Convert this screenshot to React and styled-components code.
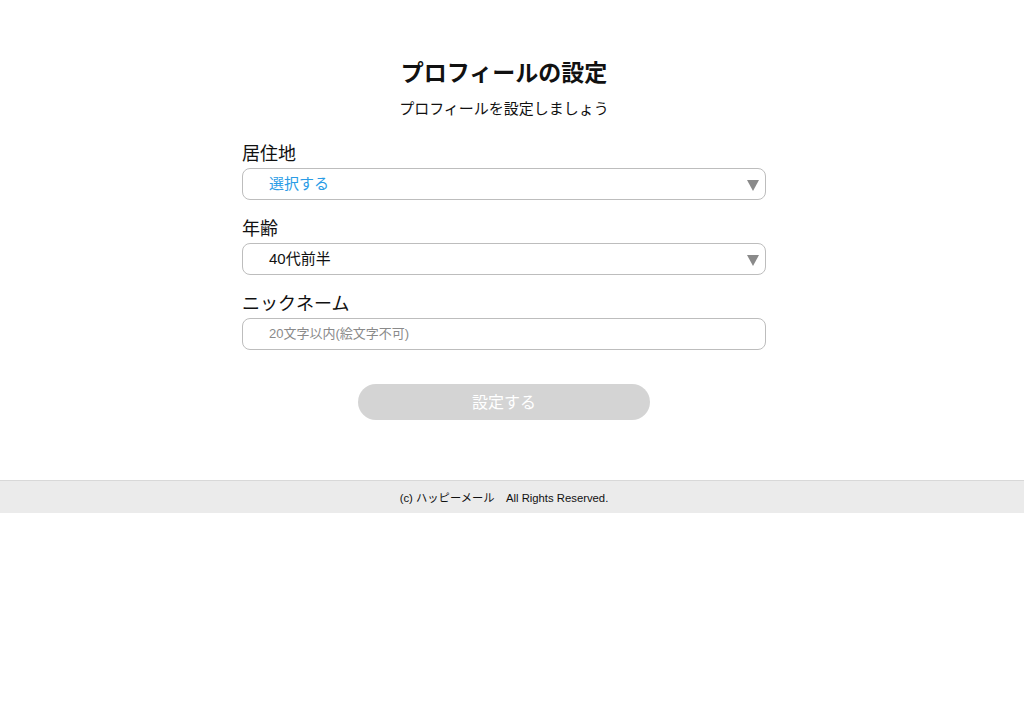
import React from "react";
import styled, { createGlobalStyle } from "styled-components";

const GlobalStyle = createGlobalStyle`
  body {
    margin: 0;
    background: #fff;
    font-family: "Liberation Sans", "Noto Sans CJK JP", sans-serif;
    color: #111;
  }
`;

const Main = styled.main`
  display: flex;
  justify-content: center;
  padding: 58px 16px 60px 0;
`;

const Form = styled.form`
  width: 524px;
  display: flex;
  flex-direction: column;
`;

const Title = styled.h1`
  margin: 0;
  text-align: center;
  font-size: 23px;
  line-height: 30px;
  font-weight: bold;
`;

const Lead = styled.p`
  margin: 11px 0 22px;
  text-align: center;
  font-size: 15px;
  line-height: 20px;
`;

const Field = styled.div`
  display: flex;
  flex-direction: column;
  margin-bottom: 16px;
`;

const Label = styled.label`
  font-size: 18px;
  line-height: 27px;
`;

const Box = styled.div`
  position: relative;
  height: 32px;
  box-sizing: border-box;
  border: 1px solid #bdbdbd;
  border-radius: 8px;
  display: flex;
  align-items: center;
  padding: 0 26px 3px;
  font-size: 15px;
  color: ${(p) => (p.$placeholder ? "#2a9ce6" : "#111")};
`;

const Arrow = styled.span`
  position: absolute;
  right: 6px;
  top: 11px;
  width: 0;
  height: 0;
  border-left: 6px solid transparent;
  border-right: 6px solid transparent;
  border-top: 11px solid #8a8a8a;
`;

const Input = styled.input`
  height: 32px;
  box-sizing: border-box;
  border: 1px solid #bdbdbd;
  border-radius: 8px;
  padding: 0 26px 1px;
  font-family: inherit;
  font-size: 13px;
  outline: none;
  &::placeholder {
    color: #8a8a8a;
  }
`;

const Submit = styled.button`
  align-self: center;
  margin-top: 18px;
  width: 292px;
  height: 36px;
  border: none;
  border-radius: 18px;
  background: #d4d4d4;
  color: #fff;
  font-family: inherit;
  font-size: 16px;
  padding: 0 0 3px;
`;

const Footer = styled.footer`
  background: #ebebeb;
  border-top: 1px solid #d8d8d8;
  height: 33px;
  box-sizing: border-box;
  display: flex;
  align-items: center;
  justify-content: center;
  padding-right: 16px;
  font-size: 11.3px;
  white-space: pre;
`;

const Select = ({ value, placeholder }) => (
  <Box $placeholder={placeholder}>
    {value}
    <Arrow />
  </Box>
);

export default function App() {
  return (
    <>
      <GlobalStyle />
      <Main>
        <Form onSubmit={(e) => e.preventDefault()}>
          <Title>プロフィールの設定</Title>
          <Lead>プロフィールを設定しましょう</Lead>
          <Field>
            <Label>居住地</Label>
            <Select value="選択する" placeholder />
          </Field>
          <Field>
            <Label>年齢</Label>
            <Select value="40代前半" />
          </Field>
          <Field>
            <Label>ニックネーム</Label>
            <Input placeholder="20文字以内(絵文字不可)" />
          </Field>
          <Submit type="submit">設定する</Submit>
        </Form>
      </Main>
      <Footer>{"(c) ハッピーメール　All Rights Reserved."}</Footer>
    </>
  );
}
